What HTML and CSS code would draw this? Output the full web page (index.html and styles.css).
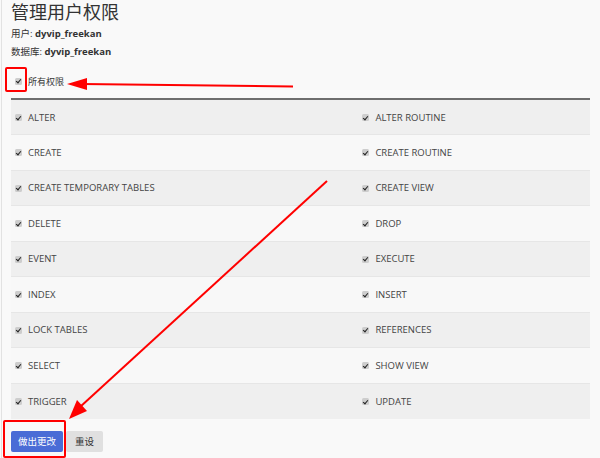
FILE: index.html
```html
<!DOCTYPE html>
<html lang="zh-CN">
<head>
<meta charset="UTF-8">
<meta name="viewport" content="width=device-width, initial-scale=1.0">
<title>管理用户权限</title>
<link rel="stylesheet" href="styles.css">
</head>
<body>

<div class="page">
  <h1 class="title">管理用户权限</h1>
  <div class="meta">用户: <b>dyvip_freekan</b></div>
  <div class="meta">数据库: <b>dyvip_freekan</b></div>

  <div class="all-privs">
    <span class="cb"></span>
    <span>所有权限</span>
  </div>

  <table class="privs">
    <tr><td><span class="cb"></span>ALTER</td><td><span class="cb"></span>ALTER ROUTINE</td></tr>
    <tr><td><span class="cb"></span>CREATE</td><td><span class="cb"></span>CREATE ROUTINE</td></tr>
    <tr><td><span class="cb"></span>CREATE TEMPORARY TABLES</td><td><span class="cb"></span>CREATE VIEW</td></tr>
    <tr><td><span class="cb"></span>DELETE</td><td><span class="cb"></span>DROP</td></tr>
    <tr><td><span class="cb"></span>EVENT</td><td><span class="cb"></span>EXECUTE</td></tr>
    <tr><td><span class="cb"></span>INDEX</td><td><span class="cb"></span>INSERT</td></tr>
    <tr><td><span class="cb"></span>LOCK TABLES</td><td><span class="cb"></span>REFERENCES</td></tr>
    <tr><td><span class="cb"></span>SELECT</td><td><span class="cb"></span>SHOW VIEW</td></tr>
    <tr><td><span class="cb"></span>TRIGGER</td><td><span class="cb"></span>UPDATE</td></tr>
  </table>

  <div class="actions">
    <button class="btn btn-primary">做出更改</button>
    <button class="btn">重设</button>
  </div>
</div>

<!-- annotation overlay -->
<svg class="marks" width="600" height="458" viewBox="0 0 600 458">
  <rect x="6" y="68" width="20" height="23" fill="none" stroke="#f00" stroke-width="2" rx="1"/>
  <line x1="293" y1="86.5" x2="82" y2="84" stroke="#f00" stroke-width="2"/>
  <polygon points="67,84 87,78 87,90" fill="#f00"/>
  <line x1="327" y1="181" x2="80" y2="407" stroke="#f00" stroke-width="2"/>
  <polygon points="69,419 87,411 77,400" fill="#f00"/>
  <rect x="4" y="421" width="61" height="36" fill="none" stroke="#f00" stroke-width="2" rx="1"/>
</svg>

</body>
</html>
```

FILE: styles.css
```css
body {
  font-family: "Open Sans", "Noto Sans CJK SC", sans-serif;
  background-color: #f9f9f9;
  color: #333;
  margin: 0;
  padding: 0;
  height: 458px;
  overflow: hidden;
}
.page {
  margin-left: 1px;
  border-left: 1px solid #e2e2e2;
  padding: 0 10px 0 9px;
  height: 458px;
}
.title {
  margin: 0;
  font-size: 18px;
  font-weight: normal;
  line-height: 24px;
}
.meta {
  font-size: 9.5px;
  line-height: 18px;
}
.meta:first-of-type {
  margin-top: 1px;
}
.meta b {
  font-weight: bold;
}
.all-privs {
  margin-top: 11px;
  height: 18px;
  display: flex;
  align-items: center;
  font-size: 9px;
  padding-left: 4px;
}
.all-privs .cb {
  margin-right: 6px;
}
.cb {
  display: inline-block;
  position: relative;
  width: 7px;
  height: 7px;
  border-radius: 1.5px;
  background: #cdcdcd;
  margin-right: 6px;
  vertical-align: -0.5px;
}
.cb::after {
  content: "";
  position: absolute;
  left: 2px;
  top: 0.5px;
  width: 2px;
  height: 4px;
  border: solid #222;
  border-width: 0 1.2px 1.2px 0;
  transform: rotate(40deg);
}
.privs {
  margin-top: 8px;
  width: 100%;
  border-collapse: collapse;
  border-top: 2px solid #6e6e6e;
  font-size: 9.5px;
  color: #444;
}
.privs td {
  height: 35.5px;
  padding: 0 0 0 4px;
  border-bottom: 1px solid #e6e6e6;
  box-sizing: border-box;
}
.privs td:first-child {
  width: 60%;
}
.privs tr:nth-child(odd) {
  background-color: #efefef;
}
.privs tr:nth-child(even) {
  background-color: #f8f8f8;
}
.privs tr:last-child td {
  border-bottom: none;
}
.actions {
  margin-top: 12px;
  display: flex;
  gap: 3px;
}
.btn {
  font-family: inherit;
  font-size: 9.5px;
  height: 21px;
  border: none;
  border-radius: 2px;
  padding: 0 9px;
  white-space: nowrap;
  background-color: #e0e0e0;
  color: #333;
}
.btn-primary {
  background-color: #4a6cd6;
  color: #fff;
  padding: 0 6px;
  width: 52px;
}
.marks {
  position: absolute;
  left: 0;
  top: 0;
  pointer-events: none;
}
```
